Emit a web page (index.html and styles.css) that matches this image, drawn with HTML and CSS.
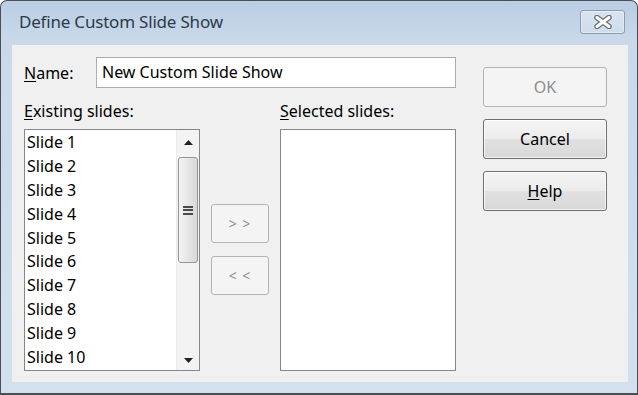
FILE: index.html
```html
<!DOCTYPE html>
<html lang="en">
<head>
  <meta charset="UTF-8" />
  <title>Define Custom Slide Show</title>
  <link rel="stylesheet" href="styles.css">
</head>
<body>
  <div class="window">
    <!-- title bar -->
    <div class="titlebar">
      <span class="title">Define Custom Slide Show</span>
      <button class="close-btn" aria-label="Close">
        <svg width="22" height="14" viewBox="0 0 22 14">
          <path d="M5 2.5 L17 11.5 M17 2.5 L5 11.5" stroke="#6a7078" stroke-width="5.5" stroke-linecap="round"/>
          <path d="M5 2.5 L17 11.5 M17 2.5 L5 11.5" stroke="#fff" stroke-width="3" stroke-linecap="round"/>
        </svg>
      </button>
    </div>

    <!-- client area -->
    <div class="client">
      <div class="main">
        <div class="name-row">
          <label class="name-label"><u>N</u>ame:</label>
          <div class="textbox">New Custom Slide Show</div>
        </div>

        <div class="lists">
          <div class="list-col">
            <div class="list-label"><u>E</u>xisting slides:</div>
            <div class="listbox">
              <ul class="items">
                <li>Slide 1</li>
                <li>Slide 2</li>
                <li>Slide 3</li>
                <li>Slide 4</li>
                <li>Slide 5</li>
                <li>Slide 6</li>
                <li>Slide 7</li>
                <li>Slide 8</li>
                <li>Slide 9</li>
                <li>Slide 10</li>
              </ul>
              <div class="scrollbar">
                <div class="arrow">
                  <svg width="9" height="5" viewBox="0 0 9 5"><path d="M0 5 L4.5 0 L9 5 Z" fill="#222"/></svg>
                </div>
                <div class="track">
                  <div class="thumb"><span class="grip"></span></div>
                </div>
                <div class="arrow arrow-down">
                  <svg width="9" height="5" viewBox="0 0 9 5"><path d="M0 0 L9 0 L4.5 5 Z" fill="#222"/></svg>
                </div>
              </div>
            </div>
          </div>

          <div class="move-btns">
            <button class="btn btn-move" disabled>&gt; &gt;</button>
            <button class="btn btn-move" disabled>&lt; &lt;</button>
          </div>

          <div class="list-col">
            <div class="list-label"><u>S</u>elected slides:</div>
            <div class="listbox"></div>
          </div>
        </div>
      </div>

      <div class="side-btns">
        <button class="btn" disabled>OK</button>
        <button class="btn">Cancel</button>
        <button class="btn"><u>H</u>elp</button>
      </div>
    </div>
  </div>
</body>
</html>
```

FILE: styles.css
```css
/* Reset & fonts */
* { margin:0; padding:0; box-sizing:border-box; }
body { font-family:"Noto Sans","Open Sans",sans-serif; font-size:16px; color:#000; background:#fff; }
u { text-decoration-thickness:1px; text-underline-offset:2px; }

/* Window frame */
.window {
  width:638px; height:395px;
  border:1px solid #4b4f55; border-bottom-width:2px; border-radius:7px 7px 0 0;
  background:linear-gradient(180deg, #b9cde3 0%, #c9d9ea 10%, #d3e1ef 100%);
  display:flex; flex-direction:column;
}
.titlebar {
  height:44px; display:flex; align-items:center; justify-content:space-between;
  padding:0 12px 4px 18px;
}
.title { font-size:17px; color:#2e3a48; letter-spacing:-0.2px; }
.close-btn {
  width:45px; height:24px; margin-top:2px; display:flex; align-items:center; justify-content:center;
  border:1px solid #8d9bad; border-radius:3px;
  background:linear-gradient(180deg, #d9e4f0, #cfdcea);
  box-shadow:inset 0 0 0 1px rgba(255,255,255,0.35);
}

/* Client area */
.client {
  flex:1; margin:0 9px 11px 11px; background:#f0f0f0;
  padding:12px 21px 0 12px;
  display:flex; justify-content:space-between;
}
.main { width:432px; }
.name-row { display:flex; align-items:center; height:31px; }
.name-label { width:72px; }
.textbox {
  width:360px; height:31px; padding:0 5px; line-height:29px;
  background:#fff; border:1px solid #abadb3;
}

.lists { display:flex; margin-top:9px; }
.list-col { width:176px; }
.list-label { height:32px; line-height:28px; }
.listbox {
  height:242px; background:#fff; border:1px solid #828790;
  display:flex; justify-content:space-between;
}
.items { list-style:none; padding:0 0 0 2px; }
.items li { height:23.9px; line-height:24px; }

/* Scroll bar */
.scrollbar {
  width:23px; display:flex; flex-direction:column;
  background:#f3f3f3; border-left:1px solid #ebebeb;
}
.arrow { height:25px; display:flex; align-items:center; justify-content:center; }
.arrow-down { padding-top:6px; }
.track { flex:1; padding:2px 1px 0 1px; }
.thumb {
  height:106px; border:1px solid #959595; border-radius:3px;
  background:linear-gradient(90deg, #f4f4f4, #e6e6e6 50%, #d8d8d8);
  display:flex; align-items:center; justify-content:center;
}
.grip {
  width:10px; height:9px;
  border-top:2px solid #4a4a4a; border-bottom:2px solid #4a4a4a;
  background:linear-gradient(#4a4a4a,#4a4a4a) center/10px 2px no-repeat;
}

/* Move buttons */
.move-btns {
  width:80px; display:flex; flex-direction:column; align-items:center; gap:13px;
  padding-top:107px;
}

/* Buttons */
.btn {
  font-family:inherit; font-size:16px; color:#000;
  border:1px solid #707070; border-radius:3px;
  background:linear-gradient(180deg, #f4f4f4 0%, #ececec 50%, #e1e1e1 51%, #d8d8d8 100%);
  box-shadow:inset 0 0 0 1px rgba(255,255,255,0.7);
}
.btn:disabled {
  color:#8d8d8d; border-color:#b4b4b4;
  background:#f4f4f4; box-shadow:none;
}
.btn-move { width:58px; height:39px; font-size:14px; letter-spacing:1px; }
.side-btns { display:flex; flex-direction:column; gap:12px; padding-top:10px; }
.side-btns .btn { width:124px; height:40px; }
```
